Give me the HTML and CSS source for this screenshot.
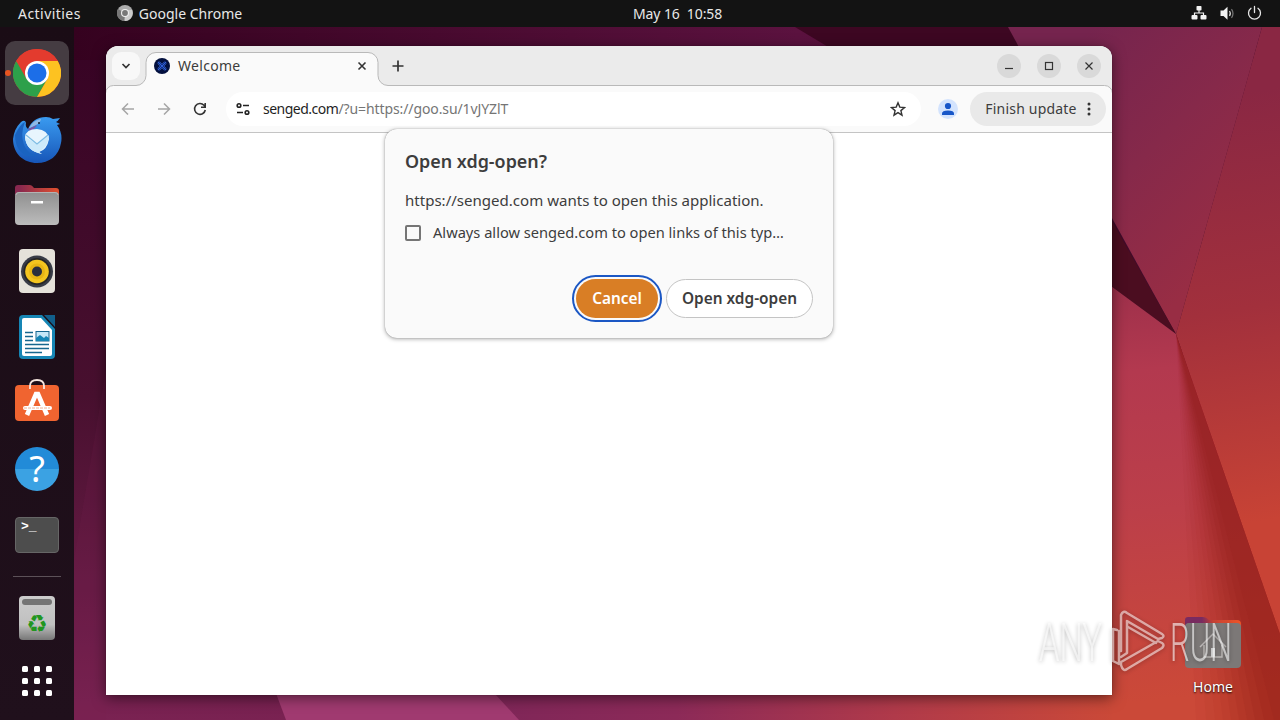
FILE: index.html
```html
<!DOCTYPE html>
<html lang="en">
<head>
    <meta charset="UTF-8">
    <meta name="viewport" content="width=device-width, initial-scale=1.0">
    <title>Desktop</title>
    <link rel="stylesheet" href="styles.css">
</head>
<body>
    <!-- Wallpaper -->
    <svg class="wallpaper" viewBox="0 0 1280 720">
        <defs>
            <linearGradient id="wpBase" x1="0" y1="0" x2="0" y2="1"><stop offset="0" stop-color="#350223"/><stop offset=".55" stop-color="#48102f"/><stop offset="1" stop-color="#7a2252"/></linearGradient>
            <linearGradient id="wpTop" x1="0" y1="0" x2="1" y2="0"><stop offset="0" stop-color="#35021f"/><stop offset=".6" stop-color="#5b123f"/><stop offset="1" stop-color="#4c0a2b"/></linearGradient>
            <linearGradient id="wpUpper" gradientUnits="userSpaceOnUse" x1="1060" y1="60" x2="1240" y2="240"><stop offset="0" stop-color="#75244e"/><stop offset=".5" stop-color="#86294a"/><stop offset="1" stop-color="#982d44"/></linearGradient>
            <linearGradient id="wpRight" gradientUnits="userSpaceOnUse" x1="1200" y1="100" x2="1270" y2="520"><stop offset="0" stop-color="#8a2743"/><stop offset=".5" stop-color="#a2303c"/><stop offset="1" stop-color="#c84335"/></linearGradient>
            <linearGradient id="wpLower" gradientUnits="userSpaceOnUse" x1="1120" y1="230" x2="1160" y2="700"><stop offset="0" stop-color="#8f2a48"/><stop offset=".3" stop-color="#b3394f"/><stop offset=".6" stop-color="#bc3f49"/><stop offset="1" stop-color="#cb4938"/></linearGradient>
            <linearGradient id="wpBottom" x1="0" y1="0" x2="1" y2="0"><stop offset="0" stop-color="#7f2658"/><stop offset=".3" stop-color="#8c2a58"/><stop offset=".65" stop-color="#b03a4a"/><stop offset="1" stop-color="#ca4938"/></linearGradient>
        </defs>
        <rect width="1280" height="720" fill="url(#wpBase)"/>
        <path d="M106 370V720H74V560Z" fill="#7a1f50" opacity=".15"/>
        <path d="M74 27H1010L1280 300V60H74Z" fill="url(#wpTop)"/>
        <path d="M795 27H1010L1030 60H850Z" fill="#3d0722"/>
        <path d="M1008 27H1262L1176 334L1112 218Z" fill="url(#wpUpper)"/>
        <path d="M1262 27H1280V645L1176 334Z" fill="url(#wpRight)"/>
        <path d="M1100 200L1176 334L1100 278Z" fill="#4b0d20"/>
        <path d="M1100 278L1176 334L1280 634V720H1100Z" fill="url(#wpLower)"/>
        <!-- fold shadow, stacked wedges getting darker to the right -->
        <g fill="#8a1a14" opacity=".85">
            <path d="M1176 334L1280 634V720H1196Z" opacity=".05"/>
            <path d="M1176 334L1280 634V720H1206Z" opacity=".06"/>
            <path d="M1176 334L1280 634V720H1215Z" opacity=".07"/>
            <path d="M1176 334L1280 634V720H1223Z" opacity=".08"/>
            <path d="M1176 334L1280 634V720H1231Z" opacity=".1"/>
            <path d="M1176 334L1280 634V720H1239Z" opacity=".12"/>
            <path d="M1176 334L1280 634V720H1247Z" opacity=".14"/>
            <path d="M1176 334L1280 634V720H1255Z" opacity=".17"/>
            <path d="M1176 334L1280 634V720H1264Z" opacity=".2"/>
            <path d="M1176 334L1280 634V720H1274Z" opacity=".2"/>
        </g>
        <path d="M490 680H1112V720H500Z" fill="url(#wpBottom)"/>
        <path d="M271 680H482L519 720H286Z" fill="#a03a70"/>
    </svg>

    <header class="topbar">
        <div class="topbar-left">
            <span class="activities">Activities</span>
            <span class="app-menu">
                <svg width="16" height="16" viewBox="0 0 16 16"><circle cx="8" cy="8" r="8" fill="#aaa"/><path d="M8 8L1 4A8 8 0 0 0 7 16Z" fill="#777"/><path d="M8 8V16A8 8 0 0 0 15 5H9Z" fill="#ccc"/><circle cx="8" cy="8" r="4" fill="#eee"/><circle cx="8" cy="8" r="2.9" fill="#777"/></svg>
                <span>Google Chrome</span>
            </span>
        </div>
        <div class="clock">May 16&nbsp; 10:58</div>
        <div class="topbar-right">
            <svg width="16" height="16" viewBox="0 0 16 16" fill="#f2f2f2"><rect x="5.500" y="1" width="5" height="4.500" rx=".8"/><rect x="0.500" y="10" width="6" height="4.500" rx="1"/><rect x="9.500" y="10" width="6" height="4.500" rx="1"/><path d="M8 5v3M3.500 10.500V8h9v2.500" fill="none" stroke="#f2f2f2" stroke-width="1.200"/></svg>
            <svg width="16" height="16" viewBox="0 0 16 16" fill="#f2f2f2"><path d="M1.500 5.500h3l4-3.700v13l-4-3.700h-3z"/><path d="M10.500 6q1.700 2.500 0 5" fill="none" stroke="#ddd" stroke-width="1.200"/><path d="M12.500 4.200q3 4.300 0 8.600" fill="none" stroke="#777" stroke-width="1.200"/></svg>
            <svg width="16" height="16" viewBox="0 0 16 16" fill="none" stroke="#e6e6e6" stroke-width="1.300" stroke-linecap="round"><path d="M7.500 1.500v6M4 3.300a6 6 0 1 0 7 0"/></svg>
        </div>
    </header>

    <main class="desktop">
        <nav class="dock">
            <div class="dock-item active">
                <svg width="48" height="48" viewBox="0 0 48 48"><circle cx="24" cy="24" r="24" fill="#e33b2e"/><path d="M24 24H13.600L3.200 12A24 24 0 0 0 24 48L34.400 30Z" fill="#2da04a"/><path d="M24 12H44.800A24 24 0 0 1 24 48L34.400 30Z" fill="#fdc221"/><path d="M24 12H44.800A24 24 0 0 0 3.200 12L13.600 30Z" fill="#e33b2e"/><circle cx="24" cy="24" r="12" fill="#fff"/><circle cx="24" cy="24" r="9.500" fill="#1c6ee8"/></svg>
            </div>
            <div class="dock-item thunderbird">
                <svg width="50" height="50" viewBox="0 0 50 50">
                    <defs><linearGradient id="bird" x1="0" y1="0" x2="0" y2="1"><stop offset="0" stop-color="#3a9bf0"/><stop offset="1" stop-color="#1756b8"/></linearGradient></defs>
                    <path d="M1 24Q2 14 9 7Q13 4 14 8Q13 12 16 14Q21 2 34 2Q38 2 41 4L48 3Q46 6 44 7L48 9L45 10Q51 18 49 28C47 41 37 48 25 48C12 48 1 39 1 24Z" fill="url(#bird)"/>
                    <path d="M3 20Q8 9 13 7Q8 19 12 30Q16 40 26 40Q15 44 8 36Q3 30 3 20Z" fill="#1a63c0"/>
                    <path d="M17 13Q21 5 29 4Q28 8 24 10L18 13Z" fill="#90b9e4"/><path d="M16 14L25 10Q22 15 18 16Z" fill="#7957a7"/><circle cx="27" cy="8" r="1" fill="#123"/>
                    <path d="M13 22Q14 14 25 14Q36 15 37 24Q35 35 27 37L30 39Q14 36 13 22Z" fill="#e8f5fd"/><path d="M13 22L25 29L37 20Q37 31 27 37L30 39Q14 36 13 22Z" fill="#cdeafa"/><path d="M14 20l11 9 11-9" fill="none" stroke="#7fbde4" stroke-width="1.200"/>
                </svg>
            </div>
            <div class="dock-item">
                <svg width="46" height="42" viewBox="0 0 46 42">
                    <defs><linearGradient id="tab"><stop offset=".1" stop-color="#88284f"/><stop offset="1" stop-color="#e2502e"/></linearGradient><linearGradient id="folder" x1="0" y1="0" x2="0" y2="1"><stop offset="0" stop-color="#8f8f8f"/><stop offset="1" stop-color="#bcbcbc"/></linearGradient></defs>
                    <path d="M1 14V4Q1 1 4 1H16Q18 1 20 4H42Q45 4 45 7V14Z" fill="url(#tab)"/><rect x="1" y="8" width="44" height="33" rx="4" fill="url(#folder)"/><path d="M2 11Q2 8.500 5 8.500H41Q44 8.500 44 11" fill="none" stroke="#bcbcbc" stroke-width=".8"/><rect x="17" y="17" width="12" height="2.500" fill="#fff"/>
                </svg>
            </div>
            <div class="dock-item">
                <svg width="36" height="44" viewBox="0 0 36 44"><rect width="36" height="44" rx="4" fill="#e5e2da"/><circle cx="18" cy="22.500" r="16" fill="#383c47"/><circle cx="18" cy="22.500" r="13.500" fill="#262626"/><circle cx="18" cy="22.500" r="11.800" fill="#f4c51f"/><circle cx="18" cy="22.500" r="8" fill="#e7b514"/><circle cx="18" cy="22.500" r="5" fill="#292e3e"/></svg>
            </div>
            <div class="dock-item">
                <svg width="36" height="44" viewBox="0 0 36 44"><path d="M4 0H23L36 14V40Q36 44 32 44H4Q0 44 0 40V4Q0 0 4 0Z" fill="#1686b5"/><path d="M25 0H36V12Z" fill="#115f8b"/><path d="M5 3H22L33 15V39Q33 41 31 41H5Q3 41 3 39V5Q3 3 5 3Z" fill="#fff"/><g stroke="#17678f" stroke-width="1.700"><path d="M6 17.500h8M6 21.500h8M6 25.500h8M6 29.500h24M6 33.500h24M6 37.500h17"/></g><rect x="17" y="16.500" width="13" height="9.500" fill="#c5e7f7" stroke="#17678f"/><path d="M17 26v-3l4-3 4 3 2-2 3 2v3z" fill="#1686b5"/></svg>
            </div>
            <div class="dock-item software">
                <svg width="46" height="46" viewBox="0 0 46 46"><rect x="1" y="8" width="44" height="36" rx="4" fill="#f06430"/><path d="M16 12V9Q16 3 23 3T30 9V12" fill="none" stroke="#f5e6df" stroke-width="1.800"/><g fill="none" stroke="#fff" stroke-linecap="round"><path d="M13 38L22 17h2L33 38" stroke-width="4.600" stroke-linecap="butt"/><path d="M11 31h25" stroke-width="4"/></g><path d="M10 31h26" stroke="#ec9c78" stroke-width=".8" stroke-dasharray="3 1"/></svg>
            </div>
            <div class="dock-item">
                <div class="help-icon">?</div>
            </div>
            <div class="dock-item">
                <div class="terminal-icon">&gt;_</div>
            </div>
            <hr class="dock-separator">
            <div class="dock-item trash">
                <div class="trash-icon">♻</div>
            </div>
            <div class="dock-item apps">
                <svg width="30" height="30" viewBox="0 0 30 30" fill="#fff"><rect width="6" height="6" rx="1.500"/><rect x="12" width="6" height="6" rx="1.500"/><rect x="24" width="6" height="6" rx="1.500"/><rect y="12" width="6" height="6" rx="1.500"/><rect x="12" y="12" width="6" height="6" rx="1.500"/><rect x="24" y="12" width="6" height="6" rx="1.500"/><rect y="24" width="6" height="6" rx="1.500"/><rect x="12" y="24" width="6" height="6" rx="1.500"/><rect x="24" y="24" width="6" height="6" rx="1.500"/></svg>
            </div>
        </nav>

        <section class="window">
            <svg class="tab-shape" width="1006" height="86" viewBox="0 0 1006 86"><path d="M-.5 88V47.500a8 8 0 0 1 8-8H30a10 10 0 0 0 10-10V16.500a10 10 0 0 1 10-10H262a10 10 0 0 1 10 10V29.500a10 10 0 0 0 10 10H998.500a8 8 0 0 1 8 8V88" fill="#fafafa" stroke="#b9b9b9"/></svg>
            <div class="tabstrip">
                <button class="tab-search"><svg width="10" height="8" viewBox="0 0 10 8"><path d="M1.500 2L5 5.500 8.500 2" fill="none" stroke="#333" stroke-width="1.700"/></svg></button>
                <div class="tab">
                    <svg width="16" height="16" viewBox="0 0 16 16"><circle cx="8" cy="8" r="8" fill="#03103e"/><path d="M4 4l8 8M12 4l-8 8" stroke="#2f60dc" stroke-width="1.300"/><path d="M5.500 3.500l2.500 2.500 2.500-2.500M5.500 12.500l2.500-2.500 2.500 2.500M3.500 5.500l2.500 2.500-2.500 2.500M12.500 5.500l-2.500 2.500 2.500 2.500" fill="none" stroke="#2854bd" stroke-width=".8"/></svg>
                    <span class="tab-title">Welcome</span>
                    <svg width="10" height="10" viewBox="0 0 10 10"><path d="M1.500 1.500l7 7M8.500 1.500l-7 7" stroke="#333" stroke-width="1.600"/></svg>
                </div>
                <svg class="new-tab" width="12" height="12" viewBox="0 0 12 12"><path d="M6 .5v11M.5 6h11" stroke="#333" stroke-width="1.700"/></svg>
                <div class="window-controls">
                    <button><svg width="10" height="10" viewBox="0 0 10 10"><path d="M1 7.500h8" stroke="#333" stroke-width="1.200"/></svg></button>
                    <button><svg width="10" height="10" viewBox="0 0 10 10"><rect x="1.500" y="1.500" width="7" height="7" fill="none" stroke="#333" stroke-width="1.200"/></svg></button>
                    <button><svg width="10" height="10" viewBox="0 0 10 10"><path d="M1.500 1.500l7 7M8.500 1.500l-7 7" stroke="#333" stroke-width="1.200"/></svg></button>
                </div>
            </div>
            <div class="toolbar">
                <svg width="16" height="16" viewBox="0 0 16 16" fill="none" stroke="#a5a5a5" stroke-width="1.500"><path d="M14 8H3M8 2.500L2.500 8 8 13.500"/></svg>
                <svg width="16" height="16" viewBox="0 0 16 16" fill="none" stroke="#a5a5a5" stroke-width="1.500"><path d="M2 8h11M8 2.500L13.500 8 8 13.500"/></svg>
                <svg width="16" height="16" viewBox="0 0 16 16" fill="none" stroke="#333" stroke-width="1.600"><path d="M13.300 9A5.400 5.400 0 1 1 12 4.300L13 5.500M13.200 2v4.200H9"/></svg>
                <div class="omnibox">
                    <svg width="16" height="16" viewBox="0 0 16 16" fill="none" stroke="#222" stroke-width="1.600"><circle cx="4" cy="4.500" r="1.800"/><path d="M8 4.500h6M2 11.500h6"/><circle cx="12" cy="11.500" r="1.800"/></svg>
                    <span class="url"><b>senged.com</b>/?u=https://goo.su/1vJYZlT</span>
                    <svg width="16" height="16" viewBox="0 0 16 16"><path d="M8 1.800l1.800 4.300 4.700.4-3.600 3.100 1.100 4.600L8 11.700l-4 2.500 1.100-4.600L1.500 6.500l4.700-.4z" fill="none" stroke="#333" stroke-width="1.400"/></svg>
                </div>
                <svg class="avatar" width="20" height="20" viewBox="0 0 20 20"><circle cx="10" cy="10" r="10" fill="#d3e3fd"/><circle cx="10" cy="7" r="3.100" fill="#1756c8"/><path d="M4 16V14.500Q4 11.500 10 11.500T16 14.500V16Z" fill="#1756c8"/></svg>
                <button class="update"><span>Finish update</span><svg width="4" height="14" viewBox="0 0 4 14" fill="#333"><circle cx="2" cy="2" r="1.500"/><circle cx="2" cy="7" r="1.500"/><circle cx="2" cy="12" r="1.500"/></svg></button>
            </div>

            <div class="dialog">
                <h1>Open xdg-open?</h1>
                <p>https://senged.com wants to open this application.</p>
                <label class="remember"><span class="checkbox"></span><span>Always allow senged.com to open links of this typ…</span></label>
                <div class="actions">
                    <button class="cancel">Cancel</button>
                    <button class="open">Open xdg-open</button>
                </div>
            </div>
        </section>

        <div class="home-icon">
            <svg width="56" height="52" viewBox="0 0 56 52"><defs><linearGradient id="homeTab"><stop offset=".3" stop-color="#792b60"/><stop offset=".5" stop-color="#c64135"/><stop offset="1" stop-color="#ee5427"/></linearGradient></defs><path d="M0 14V4Q0 1 3 1H18Q21 1 24 4H52Q56 4 56 8V14Z" fill="url(#homeTab)"/><rect y="7" width="56" height="45" rx="4" fill="#7c7877"/><path d="M15 31L28 18l13 13M19 29v12H37V29" fill="none" stroke="#bcb8b7" stroke-width="1.500"/><rect x="26" y="32" width="4" height="9" fill="#d8d8d8"/></svg>
            <span>Home</span>
        </div>
    </main>

    <svg class="watermark" width="245" height="75" viewBox="0 0 245 75">
        <text x="8" y="54" textLength="63" lengthAdjust="spacingAndGlyphs">ANY</text>
        <text x="139" y="54" textLength="62" lengthAdjust="spacingAndGlyphs">RUN</text>
        <g fill="none" stroke="#fff" stroke-width="2.500" stroke-linejoin="round" stroke-linecap="round" opacity=".55">
            <path d="M86 23L82 22V54L88 57V24M90 44V8Q92 3 96 6L131 27Q134 29 131 31L127 32L96 14V46L90 50"/>
            <path d="M90 56V58Q92 65 96 62L131 41Q134 38 131 36L127 34L90 55M97 20L125 36"/>
        </g>
    </svg>
</body>
</html>
```
FILE: styles.css
```css
* {
    box-sizing: border-box;
}
body {
    margin: 0;
    width: 1280px;
    height: 720px;
    overflow: hidden;
    display: flex;
    flex-direction: column;
    position: relative;
    background: #350223;
    font-family: "Noto Sans", "Open Sans", sans-serif;
    font-size: 14px;
    color: #3d3d3d;
}
svg {
    display: block;
    flex: none;
}
button {
    font: inherit;
    color: inherit;
    border: none;
    padding: 0;
    display: flex;
    align-items: center;
    justify-content: center;
}
.wallpaper {
    position: absolute;
    inset: 0;
    z-index: -1;
}

/* Top bar */
.topbar {
    height: 27px;
    flex: none;
    display: flex;
    align-items: center;
    padding: 0 17px 1px 18px;
    background: #131313;
    color: #e8e8e8;
}
.topbar-left {
    width: 615px;
    display: flex;
    gap: 36px;
}
.activities {
    letter-spacing: 0.45px;
}
.app-menu {
    display: flex;
    align-items: center;
    gap: 6px;
}
.clock {
    letter-spacing: -0.1px;
}
.topbar-right {
    margin-left: auto;
    display: flex;
    gap: 12px;
}

/* Dock */
.desktop {
    flex: 1;
    display: flex;
    position: relative;
}
.dock {
    width: 74px;
    padding: 14px 5px 0;
    display: flex;
    flex-direction: column;
    align-items: center;
    gap: 2px;
    background: linear-gradient(#1a0c15, #20101c);
}
.dock-item {
    width: 64px;
    height: 64px;
    flex: none;
    display: flex;
    align-items: center;
    justify-content: center;
    position: relative;
    border-radius: 10px;
}
.dock-item.active {
    background: #453c42;
}
.dock-item.active::before {
    content: "";
    position: absolute;
    left: 0;
    top: 29px;
    width: 6px;
    height: 6px;
    border-radius: 50%;
    background: #e95420;
}
.dock-item.thunderbird {
    padding-top: 2px;
}
.dock-item.software {
    padding-bottom: 6px;
}
.help-icon {
    width: 44px;
    height: 44px;
    border-radius: 50%;
    background: linear-gradient(#228bd8 50%, #3ba2e3 50%);
    color: #fff;
    font-size: 36px;
    line-height: 43px;
    text-align: center;
}
.terminal-icon {
    width: 44px;
    height: 36px;
    border-radius: 4px;
    border: 1px solid #666;
    background: #4d4d4d;
    color: #fff;
    font: bold 13px/17px "Liberation Mono", monospace;
    padding-left: 5px;
}
.trash-icon {
    width: 36px;
    height: 44px;
    padding-top: 3px;
    border-radius: 4px;
    background: linear-gradient(#ccc, #c0c0c0 65%, #777);
    color: #21961f;
    font: 24px/39px "DejaVu Sans", sans-serif;
    text-align: center;
}
.trash-icon::before {
    content: "";
    display: block;
    height: 6px;
    margin: 0 3px;
    border-radius: 3px;
    background: #747474;
}
.dock-separator {
    width: 48px;
    height: 1px;
    margin: 7px 0;
    border: none;
    background: #5c5158;
}
.dock-item.apps {
    height: 60px;
    margin-top: -1px;
}

/* Browser window */
.window {
    width: 1006px;
    height: 649px;
    margin: 19px 0 0 32px;
    position: relative;
    background: #fff;
    border-radius: 12px 12px 0 0;
    box-shadow: 0 3px 14px rgba(0,0,0,0.5), 0 0 1px rgba(0,0,0,0.6);
}
.tab-shape {
    position: absolute;
    left: 0;
    top: 0;
    background: #ebebeb;
    border-radius: 12px 12px 0 0;
}
.tabstrip {
    height: 40px;
    display: flex;
    align-items: center;
    padding: 0 8px 0 6px;
    position: relative;
}
.tab-search {
    width: 28px;
    height: 28px;
    border-radius: 9px;
    background: #f8f8f8;
}
.tab {
    width: 232px;
    margin-left: 6px;
    padding: 0 11px 0 8px;
    display: flex;
    align-items: center;
    gap: 8px;
}
.tab-title {
    flex: 1;
    padding-bottom: 2px;
    letter-spacing: 0.3px;
}
.new-tab {
    margin-left: 14px;
}
.window-controls {
    margin-left: auto;
    display: flex;
    gap: 16px;
    padding-right: 3px;
}
.window-controls button {
    width: 24px;
    height: 24px;
    border-radius: 50%;
    background: #d9d9d9;
}
.toolbar {
    height: 47px;
    display: flex;
    align-items: center;
    gap: 20px;
    padding: 0 6px 0 14px;
    position: relative;
    border-bottom: 1px solid #c4c4c4;
}
.omnibox {
    width: 695px;
    height: 34px;
    margin-left: -2px;
    padding: 0 15px 0 9px;
    display: flex;
    align-items: center;
    gap: 12px;
    border-radius: 17px;
    background: #fff;
}
.url {
    flex: 1;
    padding-bottom: 2px;
    color: #757575;
    letter-spacing: -0.1px;
}
.url b {
    font-weight: 400;
    color: #1f1f1f;
    letter-spacing: -0.5px;
}
.avatar {
    margin-left: -3px;
}
.update {
    width: 136px;
    height: 34px;
    margin-left: -8px;
    gap: 10px;
    border-radius: 17px;
    background: #e9e9e9;
    letter-spacing: 0.2px;
}
.update span {
    padding-bottom: 2px;
}

/* Protocol prompt */
.dialog {
    position: absolute;
    left: 279px;
    top: 83px;
    width: 448px;
    height: 209px;
    padding: 20px;
    display: flex;
    flex-direction: column;
    border-radius: 12px;
    background: #fafafa;
    box-shadow: 0 1px 4px rgba(0,0,0,0.35), 0 0 1px rgba(0,0,0,0.4);
}
.dialog h1 {
    margin: 0;
    font-size: 17.9px;
    font-weight: 600;
    line-height: 24px;
}
.dialog p {
    margin: 16px 0 12px;
    font-size: 15.05px;
    line-height: 22px;
}
.remember {
    display: flex;
    align-items: center;
    gap: 12px;
    font-size: 14.65px;
    line-height: 19px;
    white-space: nowrap;
}
.checkbox {
    width: 16px;
    height: 16px;
    border: 2px solid #757575;
    border-radius: 2px;
}
.actions {
    margin-top: auto;
    display: flex;
    justify-content: flex-end;
    gap: 8px;
}
.actions button {
    height: 39px;
    border-radius: 20px;
    font-size: 15.4px;
    font-weight: 600;
}
.actions .cancel {
    width: 82px;
    background: #d97e25;
    color: #fff;
    outline: 2px solid #1b57c4;
    outline-offset: 2px;
}
.actions .open {
    width: 147px;
    background: #fff;
    border: 1px solid #c4c4c4;
}

/* Home shortcut and watermark */
.home-icon {
    position: absolute;
    left: 1178px;
    top: 589px;
    width: 70px;
    display: flex;
    flex-direction: column;
    align-items: center;
    gap: 9px;
    color: #fff;
    text-shadow: 0 1px 2px #000;
}
.watermark {
    position: absolute;
    left: 1031px;
    top: 607px;
    filter: drop-shadow(0 1px 2px rgba(0,0,0,0.45));
}
.watermark text {
    font-family: Roboto, sans-serif;
    font-size: 53px;
    font-weight: 300;
    fill: rgba(255,255,255,0.6);
}
```
